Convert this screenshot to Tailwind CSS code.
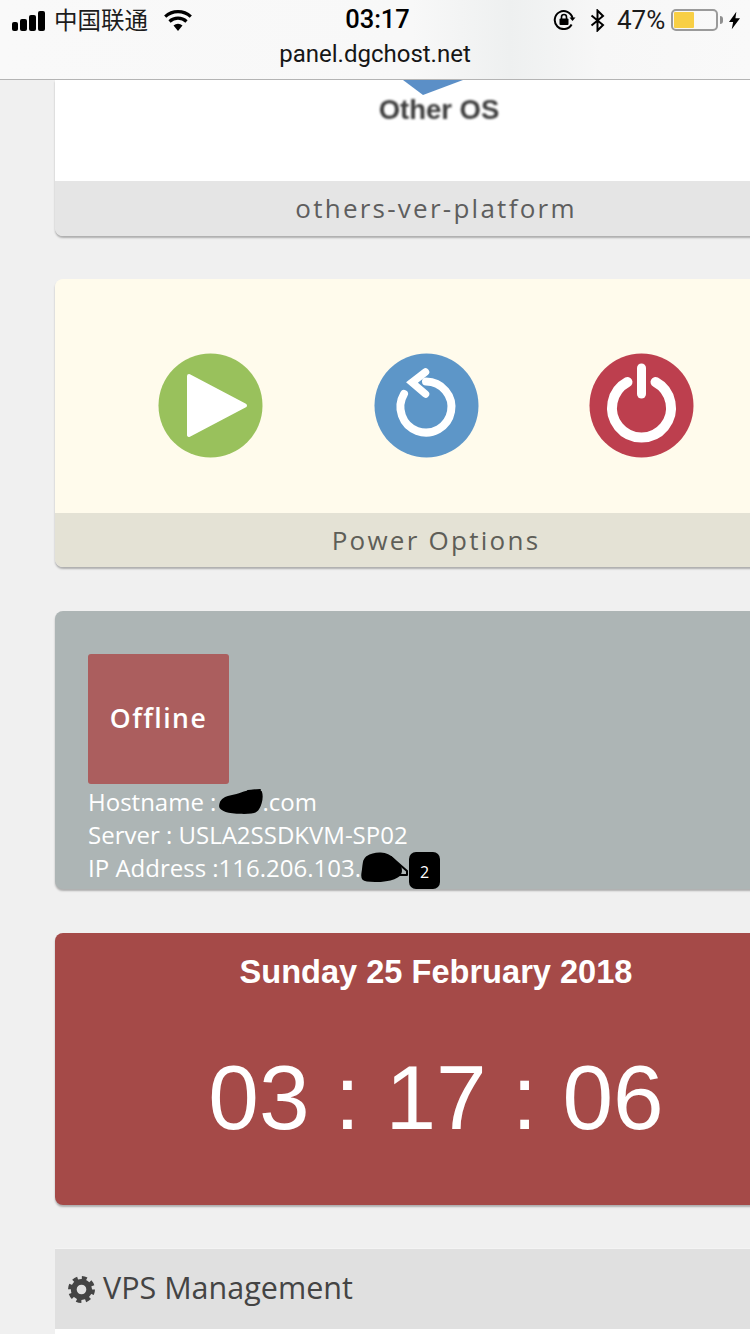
<!DOCTYPE html>
<html lang="en">
  <head>
    <meta charset="UTF-8">
    <title>VPS Panel</title>
    <script src="https://cdn.jsdelivr.net/npm/@tailwindcss/browser@4"></script>
  </head>
  <body class="bg-[#f0f0f0] h-[1334px] overflow-hidden font-['Open_Sans',sans-serif]">
    <!-- Safari status bar + address -->
    <header class="h-[80px] border-b border-[#b4b4b4] bg-[linear-gradient(90deg,#f9f9f9_0%,#f8f8f8_55%,#eef0f0_68%,#f7f7f7_80%,#f9f9f9_100%)] text-black">
      <div class="h-[40px] flex items-center justify-between pl-[12px] pr-[10px] text-[24px] font-['Roboto',sans-serif]">
        <div class="flex items-center">
          <div class="flex items-end gap-[2px] h-[20px] w-[33px] mt-[1px]">
            <span class="w-[6px] h-[9px] bg-black rounded-[2px]"></span>
            <span class="w-[7px] h-[12px] bg-black rounded-[2px]"></span>
            <span class="w-[7px] h-[16px] bg-black rounded-[2px]"></span>
            <span class="w-[7px] h-[20px] bg-black rounded-[2px]"></span>
          </div>
          <span class="ml-[9px] w-[95px] text-[23.5px] leading-none whitespace-nowrap font-['Noto_Sans_CJK_SC',sans-serif] text-[#1c1c1c]">中国联通</span>
          <svg class="ml-[15px]" width="28" height="21" viewBox="0 0 28 21">
            <path d="M14 21 9.5 15.5a7 7 0 0 1 9 0Z" fill="#000"/>
            <path d="M5.5 11.5a12.5 12.5 0 0 1 17 0" fill="none" stroke="#000" stroke-width="3.2"/>
            <path d="M1.2 6.6a19 19 0 0 1 25.6 0" fill="none" stroke="#000" stroke-width="3.2"/>
          </svg>
        </div>
        <span class="ml-[10px] text-[25.5px] font-medium leading-none">03:17</span>
        <div class="flex items-center">
          <svg width="23" height="20" viewBox="0 0 23 20" fill="none">
            <path d="M18.6 14.5A9 9 0 1 1 19.5 8" stroke="#000" stroke-width="2"/>
            <path d="M16.5 7.5h6l-3 3.500Z" fill="#000"/>
            <rect x="6.5" y="8.5" width="9" height="6.5" rx="1" fill="#000"/>
            <path d="M8.5 9V7a2.5 2.5 0 0 1 5 0v2" stroke="#000" stroke-width="1.6"/>
          </svg>
          <svg class="ml-[14px]" width="15" height="23" viewBox="0 0 15 23" fill="none">
            <path d="M1.5 6.5 13 16l-5.500 5.500v-20L13 7 1.500 16.500" stroke="#000" stroke-width="2"/>
          </svg>
          <span class="ml-[12px] w-[49px] text-[26px] text-[#1c1c1c] leading-none whitespace-nowrap">47%</span>
          <div class="ml-[5px] w-[47px] h-[22px] rounded-[5px] border-2 border-[#9a9a9a] p-[1px]">
            <div class="w-[20px] h-full bg-[#f8cf45] rounded-[1px]"></div>
          </div>
          <span class="ml-[2px] w-[3px] h-[8px] bg-[#8f8f8f] rounded-r-[3px]"></span>
          <svg class="ml-[6px]" width="11" height="19" viewBox="0 0 12 19">
            <path d="M8 0 0 11h4.500L3 19l9-12H7Z" fill="#000"/>
          </svg>
        </div>
      </div>
      <div class="text-center text-[24px] leading-[26px] mt-[1px] font-['Roboto',sans-serif] text-[#161616]">panel.dgchost.net</div>
    </header>

    <main class="pl-[55px] w-[750px] overflow-x-hidden">
      <div class="w-[762px]">
      <!-- OS template -->
      <section class="rounded-b-[8px] shadow-[0_2px_2px_rgba(0,0,0,0.28)] overflow-hidden">
        <div class="h-[101px] bg-white flex flex-col items-center pl-[6px]">
          <svg class="-ml-[12px]" width="60" height="15" viewBox="0 0 60 15">
            <path d="M0 0H60L20 15Z" fill="#5b8fc7"/>
          </svg>
          <span class="text-[27.5px] leading-[30px] font-bold text-[#3c3c3c] font-['Liberation_Sans',sans-serif] blur-[0.8px]">Other OS</span>
        </div>
        <div class="h-[55px] bg-[#e5e5e5] flex items-center justify-center text-[26px] tracking-[2.25px] text-[#5e5e5e]">others-ver-platform</div>
      </section>

      <!-- Power buttons -->
      <section class="mt-[43px] rounded-[8px] shadow-[0_2px_2px_rgba(0,0,0,0.28)] overflow-hidden">
        <div class="h-[234px] bg-[#fffbec] pl-[103px] pt-[74px] flex gap-[110.5px]">
          <svg width="105" height="105" viewBox="0 0 105 105" class="shrink-0">
            <circle cx="52.500" cy="52.500" r="52" fill="#99c15c"/>
            <path d="M31 23 87 52.500 31 82Z" fill="#fff" stroke="#fff" stroke-width="4" stroke-linejoin="round"/>
          </svg>
          <svg width="105" height="105" viewBox="0 0 105 105" class="shrink-0">
            <circle cx="52.500" cy="52.500" r="52" fill="#5d96c8"/>
            <path d="M30 41A25.500 25.500 0 1 0 52 28.500" fill="none" stroke="#fff" stroke-width="8" stroke-linecap="round"/>
            <path d="M51.500 19 38 29.500 51.500 41" fill="none" stroke="#fff" stroke-width="7.500" stroke-linecap="round"/>
          </svg>
          <svg width="105" height="105" viewBox="0 0 105 105" class="shrink-0">
            <circle cx="52.500" cy="52.500" r="52" fill="#bd3f4e"/>
            <path d="M38.500 29A29.500 29.500 0 1 0 66.500 29" fill="none" stroke="#fff" stroke-width="10" stroke-linecap="round"/>
            <path d="M52.500 15V41" fill="none" stroke="#fff" stroke-width="9" stroke-linecap="round"/>
          </svg>
        </div>
        <div class="h-[54px] bg-[#e4e2d5] flex items-center justify-center text-[26px] tracking-[2.25px] text-[#5e5e58]">Power Options</div>
      </section>

      <!-- Server info -->
      <section class="relative mt-[44px] h-[278px] rounded-[8px] bg-[#adb5b5] shadow-[0_2px_2px_rgba(0,0,0,0.28)] pl-[33px] pt-[43px] text-white">
        <div class="w-[141px] h-[130px] bg-[#ab5e5e] rounded-[3px] flex items-center justify-center pb-[1px] text-[26.5px] font-semibold tracking-[1.5px]">Offline</div>
        <div class="mt-[1px] text-[24px] leading-[33px]">
          <p class="flex items-center h-[33px]">Hostname :
            <svg class="ml-[2px] -mr-[2px] shrink-0" width="46" height="27" viewBox="0 0 46 27" fill="none" stroke="#000" stroke-linecap="round" stroke-linejoin="round">
              <path d="M3 14C6 8 14 9 22 6S38 2 43 4C45 10 42 20 38 23S14 25 8 23 1 19 3 14Z" fill="#000" stroke-width="2"/>
              <path d="M10 21 24 24M30 3 42 2" stroke-width="2"/>
            </svg>.com</p>
          <p>Server : USLA2SSDKVM-SP02</p>
          <p class="flex items-center h-[33px]">IP Address :116.206.103.
            <svg class="shrink-0" width="48" height="34" viewBox="0 0 48 34" fill="none" stroke="#000" stroke-linecap="round" stroke-linejoin="round">
              <path d="M6 6C14 1 26 1 32 8S40 14 40 20 30 30 14 30 1 27 2 18 3 9 6 6Z" fill="#000" stroke-width="2"/>
              <path d="M30 6 46 20V24H34" stroke-width="2"/>
            </svg>
          </p>
        </div>
        <span class="absolute left-[354px] top-[241px] w-[31px] h-[37px] rounded-[7px] bg-black flex items-center justify-center text-[16px] pt-[2px]">2</span>
      </section>

      <!-- Clock -->
      <section class="mt-[44px] h-[272px] rounded-[8px] bg-[#a54a48] shadow-[0_2px_2px_rgba(0,0,0,0.28)] text-white text-center font-['Liberation_Sans',sans-serif]">
        <div class="pt-[20px] text-[32.6px] leading-[38px] font-bold">Sunday 25 February 2018</div>
        <div class="mt-[57px] text-[91px] leading-[100px]">03 : 17 : 06</div>
      </section>

      <!-- VPS management -->
      <section class="mt-[43px] bg-white">
        <div class="h-[81px] bg-[#e0e0e0] border-t border-[#f4f4f4] flex items-center pl-[13px] pb-[3px] text-[30.5px] text-[#444444]">
          <svg width="27" height="27" viewBox="0 0 28 28" fill="none" class="mr-[8px] mt-[3px] shrink-0">
            <circle cx="14" cy="14" r="8" stroke="#444" stroke-width="6"/>
            <circle cx="14" cy="14" r="12" stroke="#444" stroke-width="4" stroke-dasharray="5.100 4.325"/>
          </svg>
          VPS Management
        </div>
        <div class="h-[40px]"></div>
      </section>
      </div>
    </main>
  </body>
</html>
